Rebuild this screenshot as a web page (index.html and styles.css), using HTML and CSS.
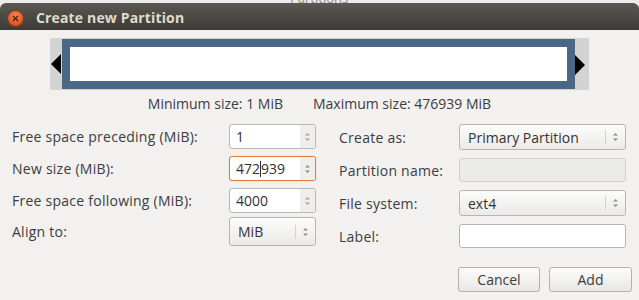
FILE: index.html
```html
<!DOCTYPE html>
<html lang="en">
<head>
    <meta charset="utf-8">
    <title>Create new Partition</title>
    <link rel="stylesheet" href="styles.css">
</head>
<body>
    <div class="desk"><span class="desk-text">Partitions</span></div>
    <div class="window">
        <div class="titlebar">
            <span class="close">
                <svg width="7" height="7" viewBox="0 0 7 7"><path d="M1 1L6 6M6 1L1 6" stroke="#4a1a08" stroke-width="1.3"/></svg>
            </span>
            <span class="title">Create new Partition</span>
        </div>

        <div class="content">
            <div class="bar-frame">
                <div class="handle handle-left"><span class="tri tri-left"></span></div>
                <div class="part"><div class="part-inner"></div></div>
                <div class="handle handle-right"><span class="tri tri-right"></span></div>
            </div>

            <div class="sizes">
                <span>Minimum size: 1 MiB</span>
                <span>Maximum size: 476939 MiB</span>
            </div>

            <div class="form">
                <div class="col col-left">
                    <div class="row">
                        <label>Free space preceding (MiB):</label>
                        <div class="spin"><span class="entry-text">1</span><span class="arrows"><svg width="7" height="12" viewBox="0 0 7 12"><path d="M1 4.5L3.5 2L6 4.5Z M1 7.5L3.5 10L6 7.5Z" fill="#a8a6a3"/></svg></span></div>
                    </div>
                    <div class="row">
                        <label>New size (MiB):</label>
                        <div class="spin focus"><span class="entry-text">472<span class="caret"></span>939</span><span class="arrows"><svg width="7" height="12" viewBox="0 0 7 12"><path d="M1 4.5L3.5 2L6 4.5Z M1 7.5L3.5 10L6 7.5Z" fill="#8e8c89"/></svg></span></div>
                    </div>
                    <div class="row">
                        <label>Free space following (MiB):</label>
                        <div class="spin"><span class="entry-text">4000</span><span class="arrows"><svg width="7" height="12" viewBox="0 0 7 12"><path d="M1 4.5L3.5 2L6 4.5Z M1 7.5L3.5 10L6 7.5Z" fill="#a8a6a3"/></svg></span></div>
                    </div>
                    <div class="row row-align">
                        <label>Align to:</label>
                        <div class="combo combo-small"><span class="combo-text">MiB</span><span class="combo-arrows"><svg width="7" height="12" viewBox="0 0 7 12"><path d="M1 4.5L3.5 2L6 4.5Z M1 7.5L3.5 10L6 7.5Z" fill="#8e8c89"/></svg></span></div>
                    </div>
                </div>

                <div class="col col-right">
                    <div class="row">
                        <label>Create as:</label>
                        <div class="combo"><span class="combo-text">Primary Partition</span><span class="combo-arrows"><svg width="7" height="12" viewBox="0 0 7 12"><path d="M1 4.5L3.5 2L6 4.5Z M1 7.5L3.5 10L6 7.5Z" fill="#8e8c89"/></svg></span></div>
                    </div>
                    <div class="row">
                        <label>Partition name:</label>
                        <div class="entry disabled"></div>
                    </div>
                    <div class="row">
                        <label>File system:</label>
                        <div class="combo"><span class="combo-text">ext4</span><span class="combo-arrows"><svg width="7" height="12" viewBox="0 0 7 12"><path d="M1 4.5L3.5 2L6 4.5Z M1 7.5L3.5 10L6 7.5Z" fill="#8e8c89"/></svg></span></div>
                    </div>
                    <div class="row">
                        <label>Label:</label>
                        <div class="entry"></div>
                    </div>
                </div>
            </div>

            <div class="buttons">
                <button class="btn btn-cancel">Cancel</button>
                <button class="btn btn-add">Add</button>
            </div>
        </div>
    </div>
</body>
</html>
```

FILE: styles.css
```css
body {
    margin: 0;
    background-color: #f2f1f0;
    font-family: "Open Sans", "Noto Sans", sans-serif;
    font-size: 14px;
    color: #3c3c3c;
    overflow: hidden;
}

.desk {
    height: 3px;
    background-color: #ebebeb;
    overflow: hidden;
    position: relative;
}

.desk-text {
    position: absolute;
    left: 290px;
    top: -11px;
    color: #8a8a8a;
    font-size: 13px;
}

.titlebar {
    height: 27px;
    display: flex;
    align-items: center;
    padding-left: 8px;
    background: linear-gradient(#5b5751, #3d3b37);
    border-radius: 6px 6px 0 0;
}

.close {
    width: 15px;
    height: 15px;
    margin-top: 3px;
    border-radius: 50%;
    background: radial-gradient(circle at 50% 35%, #f58a5c, #e25a2a 60%, #c44416);
    box-shadow: 0 0 0 1px #8a3b1c;
    display: flex;
    align-items: center;
    justify-content: center;
}

.title {
    margin-left: 13px;
    margin-top: 1px;
    font-weight: bold;
    font-size: 14px;
    color: #dfdbd2;
    letter-spacing: 0.15px;
}

/* partition graphic */

.bar-frame {
    margin: 8px 0 0 50px;
    width: 539px;
    height: 52px;
    box-sizing: border-box;
    border: 1px solid #d4d4d2;
    display: flex;
    background-color: #d3d3d3;
}

.handle {
    display: flex;
    align-items: center;
}

.handle-left {
    width: 11px;
    justify-content: flex-start;
}

.handle-right {
    width: 13px;
    justify-content: flex-start;
}

.tri {
    width: 0;
    height: 0;
    border-top: 10px solid transparent;
    border-bottom: 10px solid transparent;
}

.tri-left {
    border-right: 10px solid #000;
}

.tri-right {
    border-left: 10px solid #000;
    margin-top: 1px;
}

.part {
    flex: 1;
    background-color: #4a6785;
    padding: 8px;
}

.part-inner {
    height: 100%;
    background-color: #fff;
}

.sizes {
    display: flex;
    justify-content: center;
    gap: 30px;
    margin-top: 6px;
    line-height: 16px;
}

/* form */

.form {
    display: flex;
    margin-top: 12px;
    padding-left: 12px;
}

.col {
    display: flex;
    flex-direction: column;
}

.col-left {
    gap: 7px;
}

.col-right {
    margin-left: 23px;
    gap: 8px;
}

.row {
    display: flex;
    align-items: center;
}

label {
    letter-spacing: 0.25px;
}

.col-left label {
    width: 217px;
}

.col-right label {
    width: 120px;
}

.row-align {
    margin-top: -3px;
}

.spin {
    width: 87px;
    height: 25px;
    box-sizing: border-box;
    border: 1px solid #b9b6b1;
    border-radius: 3px;
    background-color: #fff;
    display: flex;
    overflow: hidden;
}

.spin.focus {
    border-color: #e4783f;
    box-shadow: 0 0 1px #f2a27a;
}

.entry-text {
    flex: 1;
    padding-left: 6px;
    line-height: 23px;
    color: #333;
}

.caret {
    display: inline-block;
    width: 1px;
    height: 16px;
    background-color: #333;
    vertical-align: -3px;
}

.arrows {
    width: 15px;
    background-color: #efeeed;
    display: flex;
    align-items: center;
    justify-content: center;
}

.combo {
    width: 167px;
    height: 26px;
    box-sizing: border-box;
    border: 1px solid #b9b6b1;
    border-radius: 3px;
    background: linear-gradient(#fcfcfb, #ebeae8);
    display: flex;
    align-items: center;
}

.combo-small {
    width: 87px;
    height: 29px;
}

.combo-text {
    flex: 1;
    padding-left: 8px;
    color: #333;
}

.combo-arrows {
    width: 19px;
    height: 14px;
    border-left: 1px solid #d4d2ce;
    display: flex;
    align-items: center;
    justify-content: center;
}

.entry {
    width: 167px;
    height: 24px;
    box-sizing: border-box;
    border: 1px solid #b9b6b1;
    border-radius: 3px;
    background-color: #fff;
}

.entry.disabled {
    background-color: #ebebea;
    border-color: #d2d0cc;
}

/* buttons */

.buttons {
    display: flex;
    justify-content: flex-end;
    gap: 9px;
    margin-top: 19px;
    padding-right: 7px;
}

.btn {
    height: 25px;
    border: 1px solid #b4b1ac;
    border-radius: 3px;
    background: linear-gradient(#fbfbfa, #e9e8e6);
    font-family: "Open Sans", "Noto Sans", sans-serif;
    font-size: 14px;
    color: #3c3c3c;
    padding: 0;
}

.btn-cancel {
    width: 82px;
}

.btn-add {
    width: 83px;
}
```
